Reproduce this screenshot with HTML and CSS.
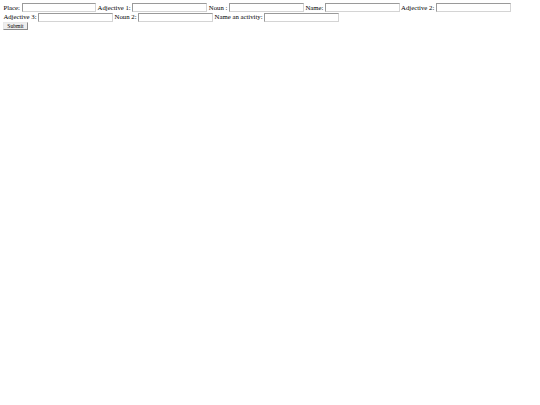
FILE: index.html
```html
<!DOCTYPE html>
<html class="page">
<head>
<meta charset="utf-8">
<link rel="stylesheet" href="styles.css">
</head>
<body class="body">
<form class="form">
<label class="item">Place: <input type="text" class="field"></label>
<label class="item">Adjective 1: <input type="text" class="field"></label>
<label class="item">Noun : <input type="text" class="field"></label>
<label class="item">Name: <input type="text" class="field"></label>
<label class="item">Adjective 2: <input type="text" class="field"></label>
<label class="item">Adjective 3: <input type="text" class="field"></label>
<label class="item">Noun 2: <input type="text" class="field"></label>
<label class="item">Name an activity: <input type="text" class="field"></label>
<br>
<input type="submit" value="Submit" class="submit">
</form>
</body>
</html>
```
FILE: styles.css
```css
.page {
  zoom: 0.421875;
  background: #fff;
  overflow: hidden;
}
.body {
  margin: 8px;
  font-family: "Liberation Serif", serif;
  font-size: 16px;
  line-height: 1.15;
  color: #000;
}
.form {
  margin: 0;
}
.item {
  white-space: nowrap;
}
.field {
  box-sizing: border-box;
  width: 177px;
  height: 21px;
  margin: 0 0 1px;
  padding: 1px 2px;
  border: 2px solid;
  border-color: #9a9a9a #d4d4d4 #d4d4d4 #9a9a9a;
  background: #fff;
  font-family: "Liberation Sans", sans-serif;
  font-size: 13.33px;
  vertical-align: baseline;
}
.submit {
  box-sizing: border-box;
  height: 18px;
  padding: 1px 7px;
  border: 2px solid;
  border-color: #e8e8e8 #8a8a8a #8a8a8a #e8e8e8;
  background: #eeeeee;
  font-family: "Liberation Serif", serif;
  font-size: 13.33px;
  color: #000;
}
```
